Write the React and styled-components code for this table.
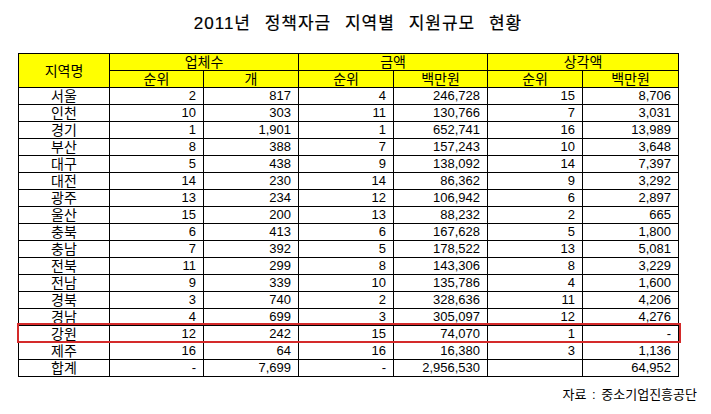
import React from "react";
import styled, { createGlobalStyle } from "styled-components";

const GlobalStyle = createGlobalStyle`
  body {
    margin: 0;
    background: #ffffff;
    font-family: "Liberation Sans", "Noto Sans CJK KR", sans-serif;
    color: #000;
  }
`;

const Page = styled.div`
  width: 711px;
  height: 414px;
  display: flex;
  flex-direction: column;
`;

const Title = styled.h1`
  margin: 13px 0 0 0;
  padding-left: 5px;
  height: 21px;
  font-size: 17px;
  line-height: 21px;
  font-weight: 400;
  letter-spacing: 1px;
  word-spacing: 8px;
  text-align: center;
  -webkit-text-stroke: 0.2px #000;
`;

const TableWrap = styled.div`
  position: relative;
  margin: 19px 0 0 18px;
  width: 660px;
`;

const Table = styled.table`
  border-collapse: collapse;
  table-layout: fixed;
  width: 661px;
  font-size: 13px;
`;

const Cell = styled.td`
  border: 1px solid #000;
  height: 16px;
  padding: 0 7px 0 0;
  line-height: 16px;
  white-space: nowrap;
  text-align: right;
`;

const NameCell = styled(Cell)`
  padding: 0;
  text-align: center;
  font-size: 14px;
`;

const Head = styled.th`
  border: 1px solid #000;
  height: 16px;
  padding: 0;
  line-height: 16px;
  font-size: 14px;
  font-weight: 400;
  background: #ffff00;
  text-align: center;
`;

// 강원 줄 빨간 박스
const Highlight = styled.div`
  position: absolute;
  left: -1px;
  width: 660px;
  height: 16px;
  border: 2px solid #d42a2a;
  pointer-events: none;
`;

const Source = styled.div`
  margin-top: 7px;
  padding-right: 14px;
  text-align: right;
  font-size: 13px;
  word-spacing: 2px;
`;

const rows = [
  ["서울", "2", "817", "4", "246,728", "15", "8,706"],
  ["인천", "10", "303", "11", "130,766", "7", "3,031"],
  ["경기", "1", "1,901", "1", "652,741", "16", "13,989"],
  ["부산", "8", "388", "7", "157,243", "10", "3,648"],
  ["대구", "5", "438", "9", "138,092", "14", "7,397"],
  ["대전", "14", "230", "14", "86,362", "9", "3,292"],
  ["광주", "13", "234", "12", "106,942", "6", "2,897"],
  ["울산", "15", "200", "13", "88,232", "2", "665"],
  ["충북", "6", "413", "6", "167,628", "5", "1,800"],
  ["충남", "7", "392", "5", "178,522", "13", "5,081"],
  ["전북", "11", "299", "8", "143,306", "8", "3,229"],
  ["전남", "9", "339", "10", "135,786", "4", "1,600"],
  ["경북", "3", "740", "2", "328,636", "11", "4,206"],
  ["경남", "4", "699", "3", "305,097", "12", "4,276"],
  ["강원", "12", "242", "15", "74,070", "1", "-"],
  ["제주", "16", "64", "16", "16,380", "3", "1,136"],
  ["합계", "-", "7,699", "-", "2,956,530", "", "64,952"],
];

const widths = [91, 94, 95, 95, 94, 95, 96];
const ROW = 17;
const markIndex = 14;

export default function App() {
  return (
    <Page>
      <GlobalStyle />
      <Title>2011년 정책자금 지역별 지원규모 현황</Title>
      <TableWrap>
        <Table>
          <colgroup>
            {widths.map((w, i) => (
              <col key={i} style={{ width: w }} />
            ))}
          </colgroup>
          <thead>
            <tr>
              <Head rowSpan={2}>지역명</Head>
              <Head colSpan={2}>업체수</Head>
              <Head colSpan={2}>금액</Head>
              <Head colSpan={2}>상각액</Head>
            </tr>
            <tr>
              <Head>순위</Head>
              <Head>개</Head>
              <Head>순위</Head>
              <Head>백만원</Head>
              <Head>순위</Head>
              <Head>백만원</Head>
            </tr>
          </thead>
          <tbody>
            {rows.map((r) => (
              <tr key={r[0]}>
                <NameCell>{r[0]}</NameCell>
                {r.slice(1).map((v, i) => (
                  <Cell key={i}>{v}</Cell>
                ))}
              </tr>
            ))}
          </tbody>
        </Table>
        <Highlight style={{ top: (2 + markIndex) * ROW - 2 }} />
      </TableWrap>
      <Source>자료 : 중소기업진흥공단</Source>
    </Page>
  );
}
